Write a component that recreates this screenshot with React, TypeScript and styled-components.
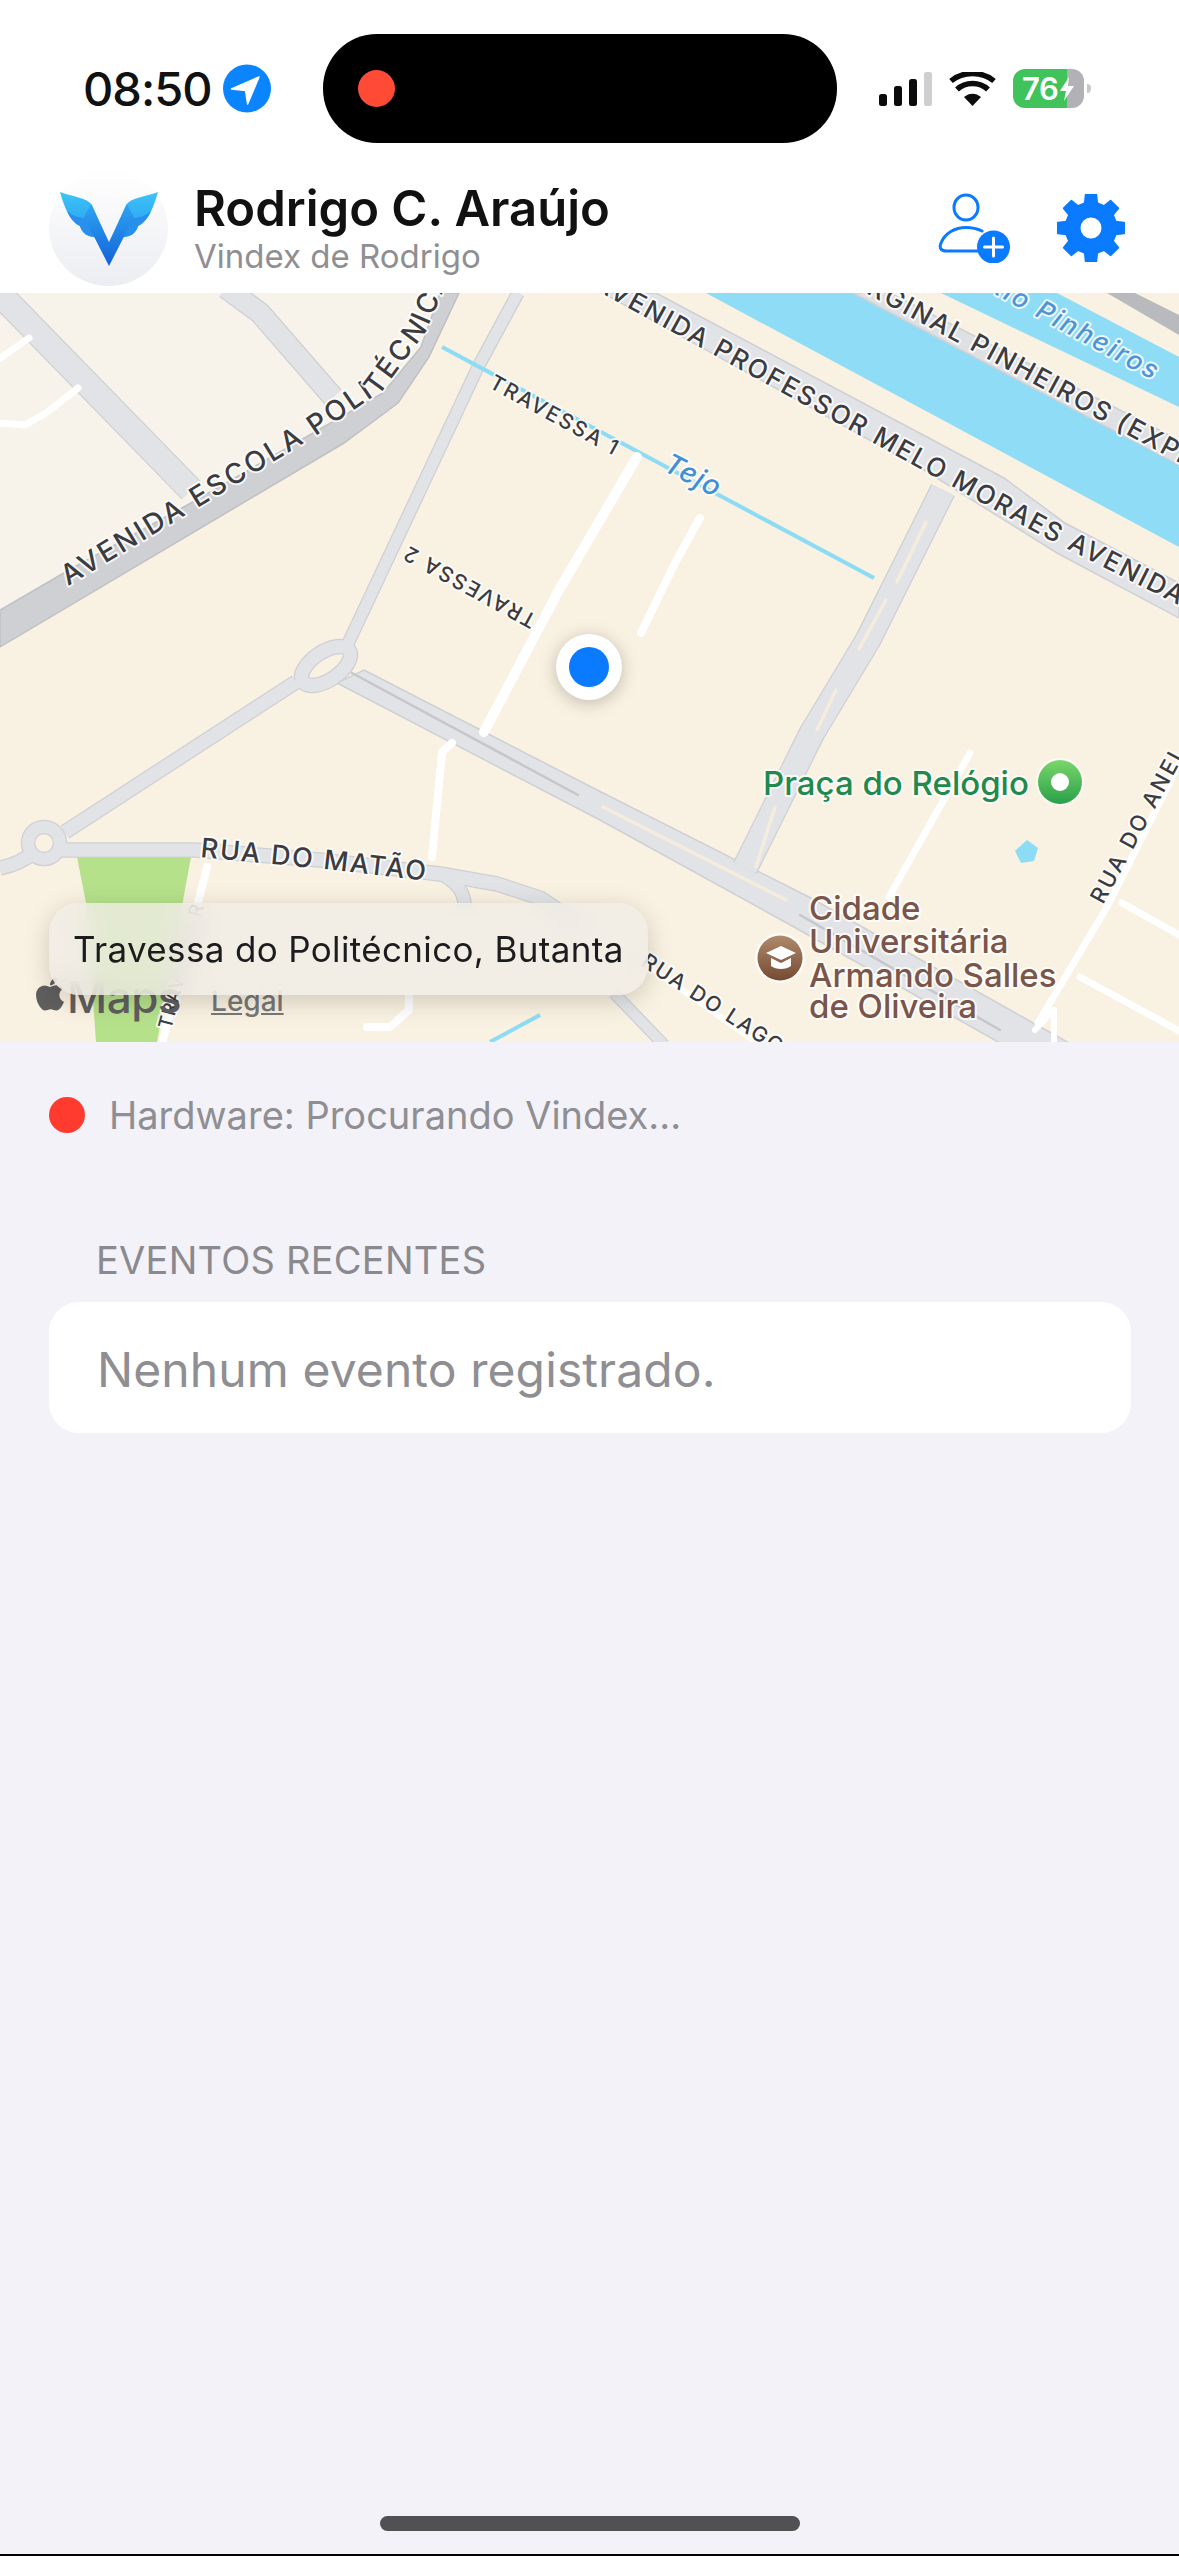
import React from 'react';
import styled, { createGlobalStyle } from 'styled-components';
import { FaApple } from 'react-icons/fa';

const Global = createGlobalStyle`
  html, body { margin: 0; padding: 0; background: #f3f2f9; }
  body { font-family: Inter, "Noto Sans", "Liberation Sans", sans-serif; overflow: hidden; }
`;

const Screen = styled.div`
  width: 1179px; height: 2556px; display: flex; flex-direction: column;
  background: #f3f2f9; border-bottom: 2px solid #000; box-sizing: border-box;
`;
const StatusBar = styled.div`
  height: 143px; box-sizing: border-box; padding-top: 34px; background: #fff;
  display: flex; align-items: center; flex: none;
`;
const StatusLeft = styled.div`
  width: 323px; box-sizing: border-box; padding-left: 83px;
  display: flex; align-items: center; gap: 11px;
`;
const Time = styled.span`
  font-size: 47px; font-weight: 550; color: #111; letter-spacing: -1px; line-height: 1;
`;
const Island = styled.div`
  width: 514px; height: 109px; border-radius: 54px; background: #000;
  display: flex; align-items: center; padding-left: 35px; box-sizing: border-box; flex: none;
`;
const RecDot = styled.div`
  width: 37px; height: 37px; border-radius: 50%; background: #ff4b36;
`;
const StatusRight = styled.div`
  display: flex; align-items: center; margin-left: 42px;
`;
const Signal = styled.div`
  display: flex; align-items: flex-end; gap: 7px; height: 34px;
`;
const SignalBar = styled.div<{ $h: number; $off?: boolean }>`
  width: 8px; height: ${p => p.$h}px; border-radius: 2.5px;
  background: ${p => (p.$off ? '#cfcfd2' : '#0b0b0d')};
`;
const Wifi = styled.svg`
  width: 47px; height: 34px; margin-left: 17px; flex: none;
`;
const Battery = styled.div`
  width: 71px; height: 39px; margin-left: 17px; border-radius: 12px; box-sizing: border-box;
  background: linear-gradient(90deg, #3fc35a 76%, #b2b1b5 76%);
  display: flex; align-items: center; padding-left: 9px; gap: 1px; color: #fff;
  font-size: 31px; font-weight: 600; letter-spacing: -0.5px;
`;
const Bolt = styled.svg`
  width: 16px; height: 24px; flex: none;
`;
const BatteryNub = styled.div`
  width: 4px; height: 9px; margin-left: 3px; background: #c9c8cc; border-radius: 0 4px 4px 0;
`;
const Header = styled.header`
  height: 150px; box-sizing: border-box; background: #fff; flex: none;
  display: flex; align-items: center; padding: 20px 54px 0 49px;
`;
const Avatar = styled.div`
  width: 119px; height: 116px; border-radius: 50%; flex: none;
  background: linear-gradient(180deg, #ffffff 0%, #ecedf2 100%);
  display: flex; align-items: center; justify-content: center;
`;
const Titles = styled.div`
  margin-left: 26px; flex: 1; display: flex; flex-direction: column;
`;
const Name = styled.div`
  font-size: 49px; font-weight: 600; color: #111; line-height: 56px;
`;
const Sub = styled.div`
  font-size: 33px; color: #8e8e93; line-height: 38px;
`;
const HeaderIcons = styled.div`
  display: flex; align-items: center; gap: 47px;
`;
const MapArea = styled.div`
  position: relative; height: 749px; overflow: hidden; flex: none; background: #f9f1e1;
`;
const MapSvg = styled.svg`
  display: block; width: 1179px; height: 749px;
`;
const RoadCase = styled.path<{ $w: number }>`
  fill: none; stroke: #cfd0d4; stroke-width: ${p => p.$w + 2.5}px; stroke-linejoin: round;
`;
const RoadFill = styled.path<{ $w: number }>`
  fill: none; stroke: #e2e3e6; stroke-width: ${p => p.$w}px; stroke-linejoin: round;
`;
const WhiteRoad = styled.path<{ $w: number }>`
  fill: none; stroke: #fff; stroke-width: ${p => p.$w}px; stroke-linejoin: round; stroke-linecap: round;
`;
const Creek = styled.path`
  fill: none; stroke: #8ddcf5; stroke-width: 4px;
`;
const Median = styled.path<{ $dark?: boolean }>`
  fill: none; stroke-linecap: round;
  stroke: ${p => (p.$dark ? '#c6c7cb' : '#f4ecdc')};
  stroke-width: ${p => (p.$dark ? 2.5 : 3.5)}px;
`;
const Area = styled.polygon<{ $fill: string; $edge?: string }>`
  fill: ${p => p.$fill};
  stroke: ${p => p.$edge ?? 'none'};
  stroke-width: 1.5px;
`;
const Label = styled.text<{ $size: number; $sp?: number; $color?: string; $italic?: boolean }>`
  font-family: Inter, "Liberation Sans", sans-serif;
  font-size: ${p => p.$size}px;
  font-weight: 500;
  font-style: ${p => (p.$italic ? 'italic' : 'normal')};
  letter-spacing: ${p => p.$sp ?? 0}px;
  fill: ${p => p.$color ?? '#3b3b40'};
  stroke: rgba(255, 255, 255, 0.82);
  stroke-width: 4px;
  paint-order: stroke;
  stroke-linejoin: round;
`;
const UserDot = styled.div`
  position: absolute; left: 556px; top: 341px; width: 66px; height: 66px; border-radius: 50%;
  background: #fff; box-shadow: 0 3px 18px rgba(0, 0, 0, 0.22);
  display: flex; align-items: center; justify-content: center;
`;
const UserCore = styled.div`
  width: 40px; height: 40px; border-radius: 50%; background: #0a7aff;
`;
const Attribution = styled.div`
  position: absolute; left: 33px; top: 680px; display: flex; align-items: flex-end;
  color: #5f5f5f;
`;
const MapsWord = styled.span`
  font-size: 44px; font-weight: 500; line-height: 48px; letter-spacing: -0.5px;
`;
const Legal = styled.span`
  font-size: 28px; font-weight: 500; line-height: 40px; margin-left: 30px; text-decoration: underline;
  color: #777;
`;
const AppleMark = styled(FaApple)`
  width: 34px; height: 38px; flex: none; margin-bottom: 8px;
`;
const Toast = styled.div`
  position: absolute; left: 49px; top: 610px; width: 599px; height: 92px; border-radius: 30px;
  background: rgba(240, 236, 230, 0.78); backdrop-filter: blur(12px);
  box-shadow: 0 6px 26px rgba(0, 0, 0, 0.17);
  display: flex; align-items: center; box-sizing: border-box; padding-left: 24px;
  font-size: 35px; color: #1c1c1e; white-space: nowrap; letter-spacing: 0.35px;
`;
const Content = styled.main`
  flex: 1; display: flex; flex-direction: column; padding: 0 48px 0 49px;
`;
const HardwareRow = styled.div`
  display: flex; align-items: center; gap: 24px; margin-top: 55px; height: 36px;
`;
const StatusDot = styled.div`
  width: 36px; height: 36px; border-radius: 50%; background: #ff3b30; flex: none;
`;
const HardwareText = styled.span`
  font-size: 38px; color: #8e8e93;
`;
const SectionTitle = styled.div`
  margin: 104px 0 0 47px; font-size: 38px; line-height: 46px; color: #8a8a8e; letter-spacing: 0.25px;
`;
const Card = styled.div`
  margin-top: 19px; height: 131px; border-radius: 30px; background: #fff;
  display: flex; align-items: center; padding: 3px 0 0 48px; box-sizing: border-box;
  font-size: 48px; color: #8e8e93; letter-spacing: 0.1px;
`;
const HomeBar = styled.div`
  margin: auto auto 23px; width: 420px; height: 15px; border-radius: 8px; background: #515052; flex: none;
`;

const gearPath = (cx: number, cy: number) => {
  const teeth = 8; const ro = 33.5; const ri = 25.5; const hole = 11.5;
  let d = '';
  for (let i = 0; i < teeth; i++) {
    const a = (i * 2 * Math.PI) / teeth - Math.PI / 2;
    const s = Math.PI / teeth;
    const pts: [number, number][] = [
      [ri, a - s * 0.62], [ro, a - s * 0.4], [ro, a + s * 0.4], [ri, a + s * 0.62],
    ];
    pts.forEach(([r, t], j) => {
      d += `${i === 0 && j === 0 ? 'M' : 'L'}${(cx + r * Math.cos(t)).toFixed(2)},${(cy + r * Math.sin(t)).toFixed(2)} `;
    });
  }
  d += `Z M${cx + hole},${cy} A${hole},${hole} 0 1 0 ${cx - hole},${cy} A${hole},${hole} 0 1 0 ${cx + hole},${cy} Z`;
  return d;
};

const roads: [string, number][] = [
  ['M-8,286 L191,490', 24],
  ['M226,288 L260,313 L333,397', 20],
  ['M518,293 L478,367 L345,650', 11],
  ['M296,682 L65,832', 13],
  ['M0,868 C15,865 25,860 34,852', 13],
  ['M60,850 L195,850 L320,860 L440,874 L497,884 L540,898 L580,925', 13],
  ['M445,876 C460,885 465,895 465,910', 12],
  ['M943,490 L868,640 L812,733 L745,868', 24],
  ['M614,993 L664,1045', 10],
];

const whiteRoads: [string, number][] = [
  ['M-4,361 L29,338', 7],
  ['M-4,423 L25,425 L46,413 L78,388', 7],
  ['M637,457 L559,590 L484,732', 10],
  ['M700,518 L675,563 L641,633', 8],
  ['M452,743 L442,752 L432,857', 8],
  ['M207,867 L161,1048', 8],
  ['M367,1027 L390,1027 L409,1010 L409,995', 8],
  ['M970,753 L889,897', 7],
  ['M1185,752 L1107,907 L1038,1023', 7],
  ['M1122,903 L1185,938', 7],
  ['M1080,977 L1185,1034', 7],
  ['M1035,1030 L1054,1010 L1054,1048', 6],
  ['M640,960 L760,1045', 6],
];

const medians: [string, boolean][] = [
  ['M352,673 L578,795', true],
  ['M603,807 L786,900', false],
  ['M926,522 L897,582', false],
  ['M886,600 L859,649', false],
  ['M836,690 L817,730', false],
  ['M775,807 L756,867', false],
  ['M800,915 L1000,1030', true],
];

const paths: [string, string][] = [
  ['escola', 'M68,586 L199,507 L314,437 L383,390 L425,333 L448,280'],
  ['melo', 'M592,288 L683,338 L1040,535 L1200,616'],
  ['marginal', 'M825,271 L1200,474'],
  ['rio', 'M985,289 L1200,406'],
  ['tejo', 'M662,470 L730,505'],
  ['t1', 'M488,387 L640,470'],
  ['t2', 'M538,616 L390,535'],
  ['matao', 'M200,857 L333,870 L445,883'],
  ['anel', 'M1103,905 L1195,735'],
  ['tr', 'M171,1030 L214,868'],
  ['lago', 'M640,965 L780,1056'],
];

const labels: [string, string, number, number, string?, boolean?][] = [
  ['escola', 'AVENIDA ESCOLA POLITÉCNICA', 28, 2.6],
  ['melo', 'AVENIDA PROFESSOR MELO MORAES AVENIDA', 26, 2],
  ['marginal', 'MARGINAL PINHEIROS (EXPRESSA)', 26, 2],
  ['rio', 'Rio Pinheiros', 26, 2.4, '#4d93d8', true],
  ['tejo', 'Tejo', 28, 1, '#3f8ed6', true],
  ['t1', 'TRAVESSA 1', 21, 2],
  ['t2', 'TRAVESSA 2', 21, 2],
  ['matao', 'RUA DO MATÃO', 27, 1.8],
  ['anel', 'RUA DO ANEL', 22, 2.6],
  ['tr', 'TRAVESSA R', 19, 1.2],
  ['lago', 'RUA DO LAGO', 21, 2],
];

const MapDrawing = () => (
  <MapSvg viewBox="0 293 1179 749">
    <defs>
      {paths.map(([id, d]) => <path key={id} id={id} d={d} />)}
      <linearGradient id="pin" x1="0" y1="0" x2="0" y2="1">
        <stop offset="0" stopColor="#7ad66a" />
        <stop offset="1" stopColor="#2aa04a" />
      </linearGradient>
      <linearGradient id="cap" x1="0" y1="0" x2="0" y2="1">
        <stop offset="0" stopColor="#b08a6c" />
        <stop offset="1" stopColor="#744a33" />
      </linearGradient>
    </defs>
    <Area $fill="#f7f3ea" points="0,293 450,293 400,400 190,510 0,625" />
    <Area $fill="#b6e18b" points="77,857 191,857 157,1042 96,1042 86,903" />
    <Area $fill="#8fdcf6" points="706,293 853,293 1179,465 1179,547" />
    <Area $fill="#8fdcf6" points="941,293 1057,293 1179,357 1179,407" />
    <Area $fill="#dfe0e3" $edge="#cfd0d4" points="853,293 890,293 1179,440 1179,465" />
    <Area $fill="#b9babe" points="1107,293 1135,293 1179,315 1179,335" />
    <Area $fill="#cfd0d4" $edge="#bfc0c4" points="0,610 69,570 191,503 383,393 421,347 440,293 459,293 429,357 398,403 344,443 0,647" />
    <Area $fill="#e2e3e6" $edge="#cfd0d4" points="603,293 656,293 1004,478 1065,523 1179,583 1179,618 1057,553 924,470" />
    <Area $fill="#e2e3e6" $edge="#cfd0d4" points="364,670 603,793 809,897 1069,1043 1000,1043 794,927 600,820 337,683" />
    {roads.map(([d, w]) => <RoadCase key={d} d={d} $w={w} />)}
    <RoadCase as="ellipse" cx={326} cy={666} rx={28} ry={14} transform="rotate(-34 326 666)" $w={13} />
    <RoadCase as="circle" cx={44} cy={843} r={16} $w={12} />
    {roads.map(([d, w]) => <RoadFill key={d} d={d} $w={w} />)}
    <RoadFill as="ellipse" cx={326} cy={666} rx={28} ry={14} transform="rotate(-34 326 666)" $w={13} />
    <RoadFill as="circle" cx={44} cy={843} r={16} $w={12} />
    {medians.map(([d, dark]) => <Median key={d} d={d} $dark={dark} />)}
    <Creek d="M442,347 L874,578" />
    <Creek d="M490,1042 L540,1015" />
    {whiteRoads.map(([d, w]) => <WhiteRoad key={d} d={d} $w={w} />)}
    <Area $fill="#8ddcf5" points="1027,840 1038,848 1034,861 1021,863 1015,851" />
    {labels.map(([id, text, size, sp, color, italic]) => (
      <Label key={id} $size={size} $sp={sp} $color={color} $italic={italic}>
        <textPath href={`#${id}`}>{text}</textPath>
      </Label>
    ))}
    <Label x={763} y={795} $size={33} $color="#1f8a4c">Praça do Relógio</Label>
    <circle cx={1060} cy={782} r={24} fill="#fff" opacity={0.75} />
    <circle cx={1060} cy={782} r={22} fill="url(#pin)" />
    <circle cx={1060} cy={782} r={9} fill="#fff" />
    <Label x={809} y={920} $size={33} $color="#7a5548">Cidade</Label>
    <Label x={809} y={953} $size={33} $color="#7a5548">Universitária</Label>
    <Label x={809} y={987} $size={33} $color="#7a5548">Armando Salles</Label>
    <Label x={809} y={1018} $size={33} $color="#7a5548">de Oliveira</Label>
    <circle cx={780} cy={958} r={25} fill="#fff" opacity={0.8} />
    <circle cx={780} cy={958} r={22.5} fill="url(#cap)" />
    <path d="M766,953 L781,946 L796,953 L781,960 Z M771,958 V966 C776,970 786,970 791,966 V958 L781,963 Z" fill="#fff" />
  </MapSvg>
);

const wingBack = 'M59,188 C72,193 85,193 91,201 L102,226 L94,233 C86,233 81,229 79,222 C70,218 64,206 59,188 Z';
const wingFront = 'M66,207 C72,212 78,214 84,214 L95,233 C87,233 81,229 79,222 C73,219 69,214 66,207 Z';

const Logo = () => (
  <svg width="98" height="75" viewBox="59 187 98 75">
    <defs>
      <linearGradient id="wing" x1="0" y1="0" x2="0" y2="1">
        <stop offset="0" stopColor="#3cc4f8" />
        <stop offset="1" stopColor="#2a9af0" />
      </linearGradient>
      <linearGradient id="vee" x1="0" y1="0" x2="0" y2="1">
        <stop offset="0" stopColor="#2ea3f3" />
        <stop offset="1" stopColor="#1262d8" />
      </linearGradient>
    </defs>
    <path fill="url(#wing)" d={wingBack} />
    <path fill="#2790ec" d={wingFront} />
    <g transform="matrix(-1 0 0 1 216 0)">
      <path fill="url(#wing)" d={wingBack} />
      <path fill="#2790ec" d={wingFront} />
    </g>
    <path fill="url(#vee)" d="M90,200 L108,238 L126,200 L133,213 L108,262 L83,213 Z" />
  </svg>
);

const PersonAdd = () => (
  <svg width="72" height="70" viewBox="939 190 72 70">
    <ellipse cx="967" cy="204.5" rx="12" ry="12.5" fill="none" stroke="#0a7aff" strokeWidth="3" />
    <path d="M979,248 H947 C942,248 940,245 942,240 C946,230 956,224.5 967,224.5 C973,224.5 978,225.5 983,228" fill="none" stroke="#0a7aff" strokeWidth="3" strokeLinecap="round" />
    <circle cx="994.5" cy="244" r="16.5" fill="#0a7aff" />
    <path d="M994.5,235 V253 M985.5,244 H1003.5" stroke="#fff" strokeWidth="3" strokeLinecap="round" />
  </svg>
);

const Gear = () => (
  <svg width="68" height="68" viewBox="1057 193 68 68">
    <path d={gearPath(1091, 227)} fill="#0a7aff" fillRule="evenodd" stroke="#0a7aff" strokeWidth="2" strokeLinejoin="round" />
  </svg>
);

export default function App() {
  return (
    <>
      <Global />
      <Screen>
        <StatusBar>
          <StatusLeft>
            <Time>08:50</Time>
            <svg width="48" height="49" viewBox="0 0 48 49">
              <circle cx="24" cy="24.5" r="24" fill="#0a84ff" />
              <path d="M36,13 L8.5,25 L22.6,26.5 L24.6,40 Z" fill="#fff" stroke="#fff" strokeWidth="1.5" strokeLinejoin="round" />
            </svg>
          </StatusLeft>
          <Island><RecDot /></Island>
          <StatusRight>
            <Signal>
              <SignalBar $h={12} />
              <SignalBar $h={20} />
              <SignalBar $h={27} />
              <SignalBar $h={34} $off />
            </Signal>
            <Wifi viewBox="0 0 47 34">
              <path d="M23.5,34 L15,25 C20,20.5 27,20.5 32,25 Z" fill="#0b0b0d" />
              <path d="M8,17.5 C16.5,9.5 30.5,9.5 39,17.5" fill="none" stroke="#0b0b0d" strokeWidth="5.5" />
              <path d="M2,9 C14,-1 33,-1 45,9" fill="none" stroke="#0b0b0d" strokeWidth="5.5" />
            </Wifi>
            <Battery>
              76
              <Bolt viewBox="0 0 16 24"><path d="M10,0 L1,14 H7 L5,24 L15,9 H9 Z" fill="#fff" /></Bolt>
            </Battery>
            <BatteryNub />
          </StatusRight>
        </StatusBar>
        <Header>
          <Avatar><Logo /></Avatar>
          <Titles>
            <Name>Rodrigo C. Araújo</Name>
            <Sub>Vindex de Rodrigo</Sub>
          </Titles>
          <HeaderIcons>
            <PersonAdd />
            <Gear />
          </HeaderIcons>
        </Header>
        <MapArea>
          <MapDrawing />
          <UserDot><UserCore /></UserDot>
          <Attribution>
            <AppleMark />
            <MapsWord>Maps</MapsWord>
            <Legal>Legal</Legal>
          </Attribution>
          <Toast>Travessa do Politécnico, Butanta</Toast>
        </MapArea>
        <Content>
          <HardwareRow>
            <StatusDot />
            <HardwareText>Hardware: Procurando Vindex...</HardwareText>
          </HardwareRow>
          <SectionTitle>EVENTOS RECENTES</SectionTitle>
          <Card>Nenhum evento registrado.</Card>
          <HomeBar />
        </Content>
      </Screen>
    </>
  );
}
